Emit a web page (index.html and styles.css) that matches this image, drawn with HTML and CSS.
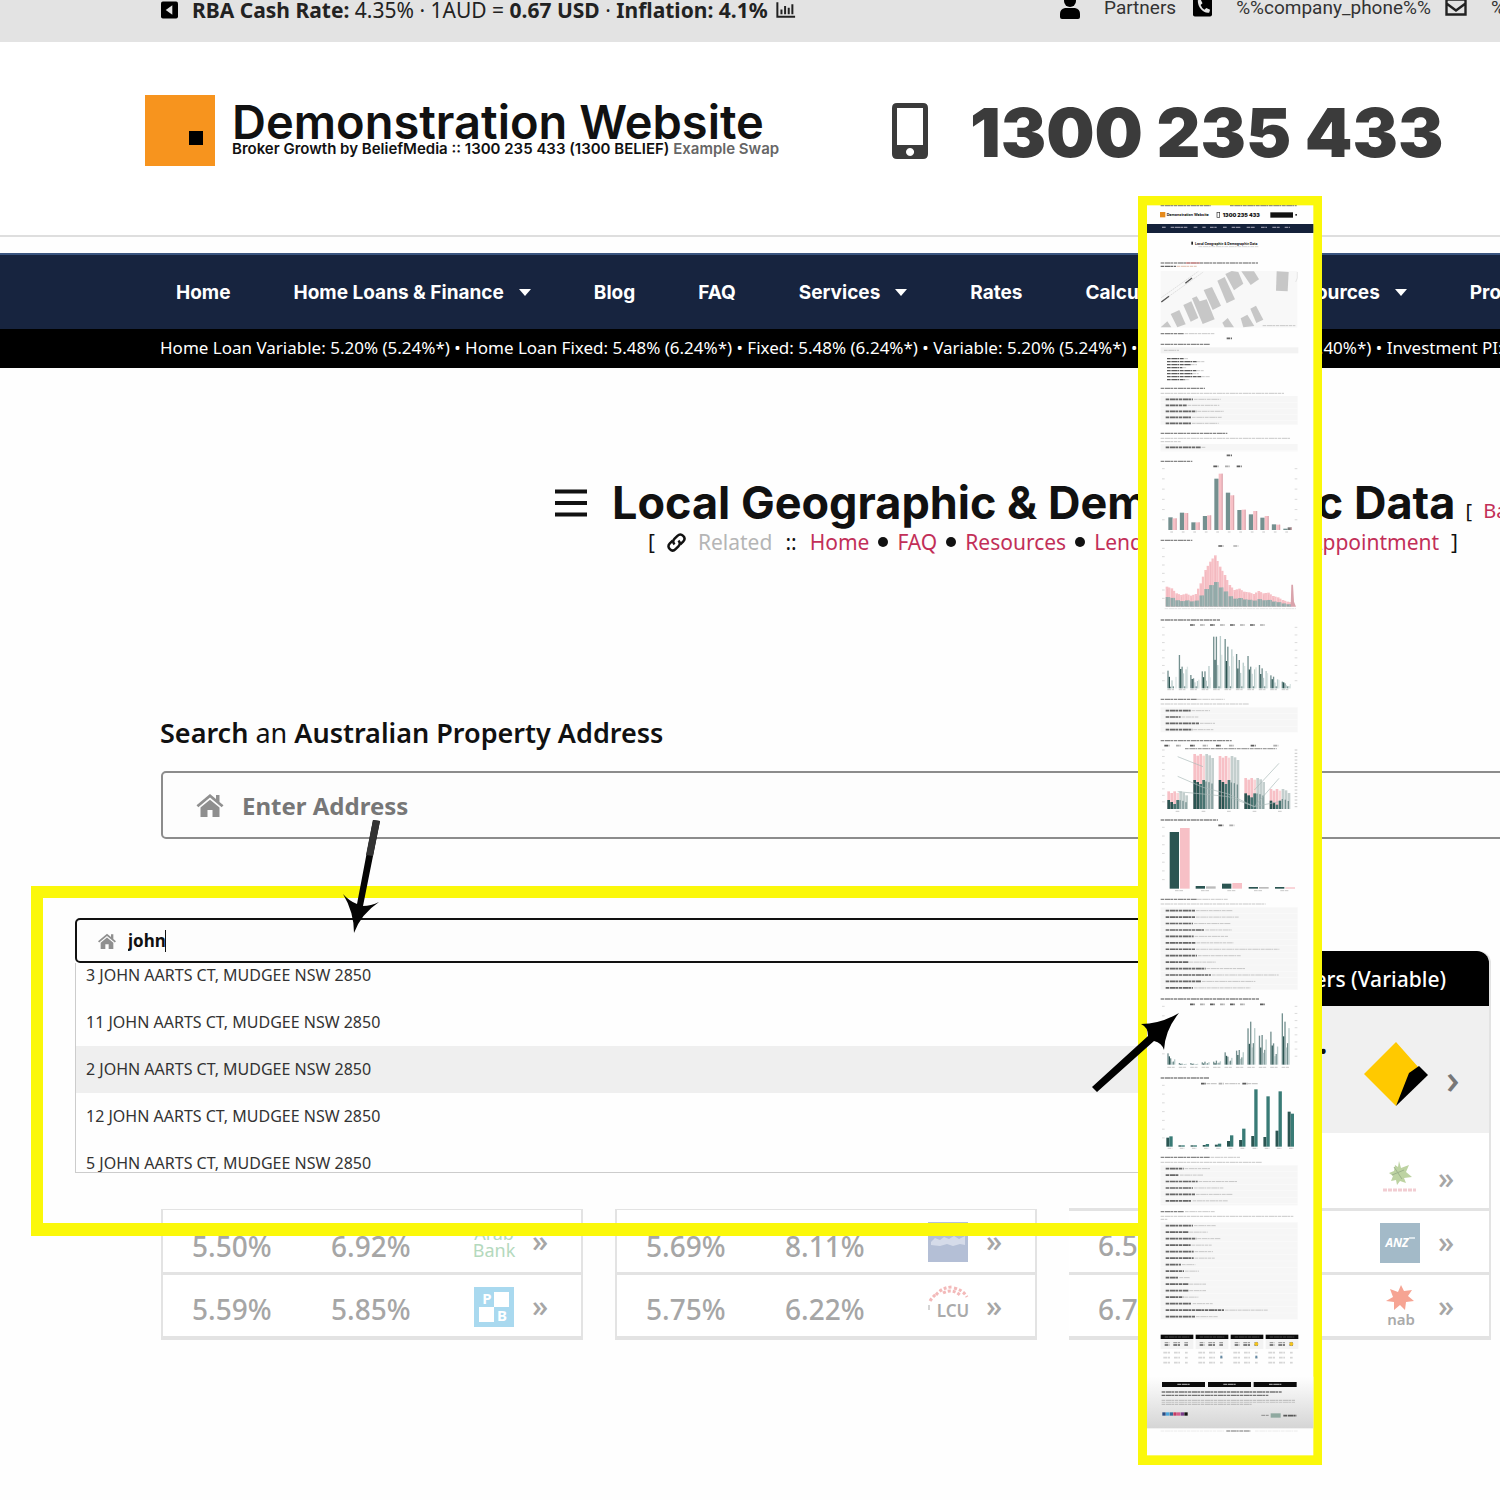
FILE: index.html
```html
<!DOCTYPE html>
<html lang="en">
<head>
<meta charset="utf-8">
<title>Local Geographic &amp; Demographic Data</title>
<link rel="stylesheet" href="styles.css">
</head>
<body>
<svg class="defs" aria-hidden="true">
  <symbol id="i-home" viewBox="0 0 28 24"><path d="M14 1 0.500 12.300 2.300 14.300 14 4.600 25.700 14.300 27.500 12.300 23.500 9V2h-3.500v4z"/><path d="M14 6.700 4.500 14.500V24h7v-7h5v7h7v-9.500z"/></symbol>
</svg>
<div class="page">
  <div class="topbar">
    <p class="rates">
      <svg class="ic-left" viewBox="0 0 18 18"><rect width="18" height="18" rx="2"/><path d="M12 4v10L5 9z" fill="#e3e3e3"/></svg>
      <span><b>RBA Cash Rate:</b> 4.35% · 1AUD = <b>0.67 USD</b> · <b>Inflation: 4.1%</b></span>
      <svg class="ic-chart" viewBox="0 0 22 18"><path d="M1.500 0v16H21M6 13V8M10 13V4M14 13V6M18 13V2" fill="none" stroke="#222" stroke-width="2.200"/></svg>
    </p>
    <div class="contacts">
      <svg class="ic-user" viewBox="0 0 20 24"><circle cx="10" cy="6" r="6"/><path d="M5 13h10q5 1 5 6v3q0 2-2 2H2q-2 0-2-2v-3q0-5 5-6z"/></svg>
      <a href="#">Partners</a>
      <svg class="ic-phone" viewBox="0 0 20 20"><rect width="20" height="20" rx="2"/><path d="M5 3 8 2l2 4-2 2q1 3 4 5l2-2 4 2-1 3C11 17 5 11 5 3z" fill="#e3e3e3"/></svg>
      <a href="#">%%company_phone%%</a>
      <svg class="ic-mail" viewBox="0 0 22 18"><path d="M1.500 1.500h19v15h-19zM1.500 5.500l9.500 7 9.500-7" fill="none" stroke="#222" stroke-width="2.400"/></svg>
      <a href="#">%%company_email%%</a>
    </div>
  </div>

  <header class="brand">
    <svg class="logo" viewBox="0 0 70 71"><rect width="70" height="71" fill="#f7941e"/><rect x="44" y="36" width="14" height="14"/></svg>
    <div class="names">
      <strong class="name">Demonstration Website</strong>
      <span class="tag">Broker Growth by BeliefMedia :: 1300 235 433 (1300 BELIEF) <em>Example Swap</em></span>
    </div>
    <svg class="mobile" viewBox="0 0 36 56"><path fill-rule="evenodd" fill="#3b3b3b" d="M5 0h26q5 0 5 5v46q0 5-5 5H5q-5 0-5-5V5q0-5 5-5zm0 5v37h26V5zm13 40a4 4 0 1 0 .1 0z"/></svg>
    <strong class="number">1300 235 433</strong>
  </header>

  <nav class="menu">
    <a href="#">Home</a><a class="sub" href="#">Home Loans &amp; Finance</a><a href="#">Blog</a><a href="#">FAQ</a><a class="sub" href="#">Services</a><a href="#">Rates</a><a class="sub" href="#">Calculators</a><a class="sub" href="#">Resources</a><a href="#">Property</a>
  </nav>
  <p class="ticker">Home Loan Variable: 5.20% (5.24%*) • Home Loan Fixed: 5.48% (6.24%*) • Fixed: 5.48% (6.24%*) • Variable: 5.20% (5.24%*) • Investment: <span class="rate">5.49% (5.40%*)</span> • Investment PI: 5.49%</p>

  <main>
    <div class="heading">
      <svg class="burger" viewBox="0 0 32 28"><path d="M0 2.500h32M0 14h32M0 25.500h32" stroke="#111" stroke-width="4"/></svg>
      <h1>Local Geographic &amp; Demographic Data</h1>
      <span class="back">[ <a href="#">Back</a> ]</span>
    </div>
    <div class="related">
      <span>[</span>
      <svg class="ic-link" viewBox="0 0 20 20" fill="none" stroke="#111" stroke-width="2.600"><path d="M8 12q-3-3 0-6l3-3q3-3 6 0t0 6l-3 3"/><path d="M12 8q3 3 0 6l-3 3q-3 3-6 0t0-6l3-3"/></svg>
      <span class="muted">Related</span><span class="sep">::</span>
      <a href="#">Home</a><i></i><a href="#">FAQ</a><i></i><a href="#">Resources</a><i></i><a href="#">Lenders</a><i></i><a class="appt" href="#">Appointment</a>
      <span>]</span>
    </div>

    <label class="search-label" for="address"><b>Search</b> an <b>Australian Property Address</b></label>
    <div class="field">
      <svg class="house"><use href="#i-home"/></svg>
      <input id="address" type="text" placeholder="Enter Address">
    </div>

    <section class="cards">
      <table class="card">
        <colgroup><col class="c-rate"><col class="c-rate"><col class="c-bank"><col></colgroup>
        <tbody>
          <tr><td>5.50%</td><td>6.92%</td><td class="bank"><svg viewBox="0 0 40 40"><text x="20" y="18" class="bank-green">Arab</text><text x="20" y="35" class="bank-green">Bank</text></svg></td><td class="go">»</td></tr>
          <tr><td>5.59%</td><td>5.85%</td><td class="bank"><svg viewBox="0 0 40 40"><rect width="40" height="40" fill="#a9d9ef"/><path d="M20 5h15v15H20zM5 20h15v15H5z" fill="#fff"/><text x="13" y="17" class="pb">P</text><text x="28" y="34" class="pb">B</text></svg></td><td class="go">»</td></tr>
        </tbody>
      </table>
      <table class="card">
        <colgroup><col class="c-rate"><col class="c-rate"><col class="c-bank"><col></colgroup>
        <tbody>
          <tr><td>5.69%</td><td>8.11%</td><td class="bank"><svg viewBox="0 0 40 40"><rect width="40" height="40" fill="#b4bfd6"/><path d="M3 20l4-4 5 2 4-3 5 2 5-3 5 3 6-3v9l-5-1-7 2-6-2-7 2-9-1z" fill="#d5dbe9"/></svg></td><td class="go">»</td></tr>
          <tr><td>5.75%</td><td>6.22%</td><td class="bank"><svg viewBox="0 0 40 40"><path d="M2 14q3-5 8-8M8 8q6-8 17-8M26 1q9 2 13 9M15 6q10-5 18 3" fill="none" stroke="#f3b9b9" stroke-width="3" stroke-dasharray="3 2"/><path d="M1 18v5" stroke="#aaa"/><text x="25" y="30" class="lcu">LCU</text></svg></td><td class="go">»</td></tr>
        </tbody>
      </table>
      <table class="card lenders">
        <colgroup><col class="c-rate"><col class="c-rate"><col class="c-bank"><col></colgroup>
        <thead><tr><th colspan="4">Lenders (Variable)</th></tr></thead>
        <tbody>
          <tr class="lead"><td></td><td class="dot">•</td><td class="bank"><svg viewBox="0 0 64 64"><path d="M32 0 0 32l32 32 14-29 9-9z" fill="#ffc900"/><path d="M55 24 45 31 32 64l32-31z"/></svg></td><td class="go">›</td></tr>
          <tr class="tall"><td></td><td></td><td class="bank"><svg viewBox="0 0 40 40"><path d="M19 3l2 7 8-3-3 7 6 5-8 1 2 5-6-2-3 4-1-5-5 1 2-5-4-3 5-2 1-6 3 2z" fill="#bdd3a2"/><path d="M14 9l8 12M12 17l12-5" stroke="#9db38c"/><path d="M3 32h33" stroke="#f2cdd2" stroke-width="3" stroke-dasharray="4 1"/></svg></td><td class="go">»</td></tr>
          <tr><td>6.59%</td><td></td><td class="bank"><svg viewBox="0 0 40 40"><rect width="40" height="40" fill="#a3bac8"/><text x="17" y="24" class="anz">ANZ</text><path d="M29 15h6" stroke="#dbe6ec" stroke-width="2"/></svg></td><td class="go">»</td></tr>
          <tr><td>6.74%</td><td></td><td class="bank"><svg viewBox="0 0 40 40"><path d="M21-2l3 6 8-1-4 6 6 5-8 1-1 8-5-5-6 5 0-8-8-1 7-4-3-8 8 3z" fill="#f6a493"/><text x="21" y="38" class="nab">nab</text></svg></td><td class="go">»</td></tr>
        </tbody>
      </table>
    </section>
  </main>

  <section class="callout">
    <div class="panel">
      <div class="field small">
        <svg class="house"><use href="#i-home"/></svg>
        <input type="text" value="john" aria-label="Address"><span class="caret"></span>
      </div>
      <ul class="results">
        <li>3 JOHN AARTS CT, MUDGEE NSW 2850</li>
        <li>11 JOHN AARTS CT, MUDGEE NSW 2850</li>
        <li class="on">2 JOHN AARTS CT, MUDGEE NSW 2850</li>
        <li>12 JOHN AARTS CT, MUDGEE NSW 2850</li>
        <li>5 JOHN AARTS CT, MUDGEE NSW 2850</li>
      </ul>
    </div>
  </section>

  <svg id="report" class="report" viewBox="24 18 552 3807" role="img" aria-label="Property report overview"></svg>

  <svg class="arrow arrow-a" viewBox="0 0 40 114"><path d="M30 0l7 1L20 86Q28 86 36 82 18 94 11 113 11 92 0 74q6 7 14 10z" fill="#050505"/><path d="M30 0l7 1-7 35-7-1z" fill="#333"/></svg>
  <svg class="arrow arrow-b" viewBox="0 0 88 80"><path d="M0 74 56 23Q56 14 49 11 68 11 87 0 73 17 72 37 70 30 62 28L5 79z"/></svg>
</div>
<script src="report.js"></script>
</body>
</html>
```
FILE: styles.css
```css
* { box-sizing: border-box; }
body { margin: 0; background: #fefefe; color: #111; font-family: "Noto Sans", "Open Sans", sans-serif; }
a { color: inherit; text-decoration: none; }
p, h1, ul { margin: 0; padding: 0; }
svg { flex: none; display: block; }
.defs { position: absolute; width: 0; height: 0; }
.page { position: relative; overflow: hidden; min-height: 1500px; white-space: nowrap; }

.topbar { display: flex; height: 42px; padding-left: 161px; background: #e3e3e3; overflow: hidden; }
.rates { display: flex; flex: none; width: 899px; height: 20px; align-items: center; font-size: 21px; color: #222; }
.ic-left { width: 17px; height: 18px; margin-right: 14px; }
.ic-chart { width: 20px; height: 17px; margin-left: 8px; }
.contacts { display: flex; height: 14px; align-items: center; font: 19px Roboto, sans-serif; color: #333; }
.ic-user { width: 20px; height: 24px; margin-right: 24px; }
.ic-phone { width: 19px; height: 20px; margin: 0 24px 0 17px; }
.ic-mail { width: 22px; height: 18px; margin: 0 24px 0 14px; }

.brand { display: flex; height: 195px; padding: 53px 0 0 145px; border-bottom: 2px solid #dedede; background: #fff; font-family: Inter, sans-serif; }
.logo { width: 70px; height: 71px; }
.names { display: flex; flex: none; flex-direction: column; width: 676px; padding: 8px 0 0 17px; }
.name { font-size: 47px; font-weight: 600; line-height: 38px; }
.tag { font-size: 15px; font-weight: 600; line-height: 16px; }
.tag em { font-style: normal; color: #666; }
.mobile { width: 36px; height: 56px; margin: 8px 42px 0 1px; }
.number { font-size: 68px; font-weight: 900; line-height: 74px; color: #3b3b3b; }

.menu { display: flex; gap: 63px; align-items: center; height: 76px; margin-top: 16px; padding-left: 176px; border-top: 2px solid #3a5580; background: #17243f; color: #fff; font: 700 19px Inter, sans-serif; }
.sub { display: flex; align-items: center; gap: 15px; }
.sub::after { content: ""; border: 6px solid transparent; border-top: 7px solid #fff; border-bottom: 0; }
.ticker { height: 39px; padding-left: 160px; background: #000; color: #fff; font-size: 17px; line-height: 38px; }
.ticker .rate { margin-left: 10px; }

.heading { display: flex; align-items: center; height: 50px; margin: 110px 0 0 555px; }
.burger { width: 32px; height: 28px; margin-right: 25px; }
h1 { font: 700 45px/50px Inter, sans-serif; }
.back { margin: 14px 0 0 10px; font-size: 20px; }
.back a { margin-left: 6px; }
.back a, .related a { color: #c22f58; }
.related { display: flex; align-items: center; width: 810px; height: 28px; margin: 0 0 2px 648px; font-size: 21px; }
.ic-link { width: 19px; height: 19px; margin: 0 12px; }
.muted { color: #b5b5b5; }
.sep { margin: 0 13px; }
.related i { width: 10px; height: 10px; margin: 0 9px; border-radius: 50%; background: #111; }
.related .appt { margin: 0 12px 0 auto; }

.search-label { display: block; margin: 159px 0 20px 160px; font-size: 27px; line-height: 36px; }
.search-label b { font-weight: 600; }
.field { display: flex; align-items: center; height: 68px; margin-left: 161px; margin-right: -20px; padding-left: 33px; border: 2px solid #8c8c8c; border-radius: 5px; background: #fdfdfd; }
.house { width: 28px; height: 24px; fill: #8f8f8f; }
.field input { flex: 1; margin: 0; padding: 0 0 0 18px; border: 0; outline: 0; background: none; color: #111; font: 700 24px "Noto Sans", sans-serif; }
.field input::placeholder { color: #777; opacity: 1; }

.cards { display: grid; grid-template-columns: repeat(3, 422px); gap: 32px; align-items: end; margin: 112px 0 160px 161px; }
.card { width: 100%; table-layout: fixed; border-collapse: separate; border-spacing: 0; border: 2px solid #e3e3e3; border-top-width: 1px; border-bottom-width: 4px; color: #a6a6a6; font-size: 28px; font-weight: 500; background: #fff; }
.c-rate { width: 139px; }
.c-bank { width: 79px; }
.card td { height: 62px; padding: 9px 0 0 29px; }
.card tr + tr td { height: 64px; border-top: 3px solid #e3e3e3; padding-top: 6px; }
.card td.bank { padding: 2px 0 0 33px; }
.card td.go { padding: 0 0 0 12px; font-size: 30px; line-height: 40px; }
.bank svg { width: 40px; height: 40px; overflow: visible; }
.lenders { border-width: 0 2px 4px 0; border-radius: 12px 12px 0 0; }
.lenders th { height: 55px; padding: 0 43px 0 0; border-radius: 12px 12px 0 0; background: #000; color: #fff; font-size: 21px; font-weight: 500; text-align: right; }
.card .lead td { height: 127px; background: #f0f0f0; }
.card .lead td.bank { padding: 8px 0 0 17px; }
.card .lead .bank svg { width: 64px; height: 64px; }
.card .lead td.go { padding: 16px 0 0 20px; color: #777; font-size: 42px; }
.card .lead td.dot { padding: 0 20px 36px 0; color: #111; text-align: right; font-size: 20px; }
.card .tall td { height: 75px; border-top: 0; }
.card .tall td.bank, .card .tall td.go { padding-top: 14px; }
.bank-green { font: 18px "Noto Sans", sans-serif; fill: #b4d9bd; text-anchor: middle; }
.pb { font: 700 15px "Noto Sans", sans-serif; fill: #fff; text-anchor: middle; }
.lcu { font: 600 17px "Noto Sans", sans-serif; fill: #aaa; text-anchor: middle; }
.anz { font: italic 700 12px "Noto Sans", sans-serif; fill: #fff; text-anchor: middle; }
.nab { font: 600 15px "Noto Sans", sans-serif; fill: #aaa; text-anchor: middle; }

.callout { position: absolute; left: 31px; top: 886px; width: 1180px; height: 350px; border: 12px solid #fbf80a; border-bottom-width: 13px; }
.panel { height: 308px; padding: 20px 0 0 32px; background: #fefefe; }
.small { height: 45px; margin: 0; padding-left: 20px; border-color: #111; }
.small .house { width: 20px; height: 16px; }
.field.small input { flex: none; width: 48px; padding-left: 11px; font-size: 17px; }
.caret { width: 1px; height: 22px; background: #111; }
.results { height: 210px; overflow: hidden; list-style: none; border: solid #ccc; border-width: 0 0 1px 1px; font-size: 16px; line-height: 47px; color: #333; }
.results li { height: 47px; padding-left: 10px; }
.results li:first-child { margin-top: -11px; }
.results .on { background: #efefef; }

.report { position: absolute; left: 1138px; top: 196px; width: 184px; height: 1269px; }
.arrow { position: absolute; }
.arrow-a { left: 343px; top: 820px; width: 40px; height: 114px; }
.arrow-b { left: 1092px; top: 1013px; width: 88px; height: 80px; }
```
FILE: report.js
```js
const svg = document.getElementById('report');
const NS = 'http://www.w3.org/2000/svg';
const TEAL = '#2b5552', GREY = '#74908f', PALE = '#b9cccb', PINK = '#f7c0c6', ROSE = '#d9a3ab';

function add(tag, attrs, text) {
  const el = document.createElementNS(NS, tag);
  for (const k in attrs) el.setAttribute(k, attrs[k]);
  if (text) el.textContent = text;
  svg.appendChild(el);
}
const box = (x, y, w, h, fill) => add('rect', { x, y, width: w, height: h, fill });
const line = (x, y, w, color = '#999', h = 4) =>
  add('path', { d: `M${x} ${y}h${w}`, stroke: color, 'stroke-width': h, 'stroke-dasharray': '11 2 17 1 6 2', 'stroke-opacity': .8 });
const label = (x, y, size, text, fill = '#111', weight = 700) =>
  add('text', { x, y, fill, 'font-size': size, 'font-weight': weight, 'font-family': 'Inter, sans-serif' }, text);
const poly = (points, fill) => add('polygon', { points, fill });

box(24, 18, 552, 3807, '#fbf80a');
box(51, 46, 499, 3750, '#fefefe');

/* site header */
line(92, 47, 150, '#776'); line(300, 47, 200, '#776');
box(90, 66, 16, 16, '#e58a1c');
label(110, 79, 11, 'Demonstration Website');
add('rect', { x: 261, y: 67, width: 8, height: 15, fill: 'none', stroke: '#333', 'stroke-width': 2 });
label(278, 81, 16, '1300 235 433', '#111', 900);
box(421, 67, 68, 16, '#111'); box(496, 72, 5, 5, '#333');
box(51, 102, 499, 27, '#14213a');
[[96, 12], [122, 50], [191, 12], [217, 10], [240, 20], [279, 12], [305, 26], [350, 24], [393, 18], [427, 22], [464, 16]].forEach(([x, w]) => line(x, 112, w, '#aab', 4));
box(184, 155, 5, 9, '#222');
label(195, 164, 10, 'Local Geographic & Demographic Data');
line(205, 170, 180, '#ccc', 3);
line(92, 219, 292, '#777'); line(168, 219, 42, '#d88'); line(92, 229, 46, '#444'); line(140, 229, 60, '#dba');

/* map */
box(92, 243, 410, 170, '#f8f8f8');
['122,372 148,360 167,403 142,412', '160,345 184,334 205,384 182,395', '186,325 200,319 209,334 230,328 254,388 218,402', '221,300 246,291 273,347 248,360', '262,272 284,261 315,328 290,340', '286,252 305,243 325,246 340,281 312,301', '334,244 372,244 387,268 362,285', '440,244 476,246 473,304 438,302', '92,412 112,394 124,412', '277,398 293,384 312,412 284,412', '332,385 352,374 373,408 340,412', '361,356 378,347 400,389 379,399'].forEach(p => poly(p, '#c7c7c7'));
add('path', { d: 'M94 335 220 246M94 323 205 244', stroke: '#aaa', 'stroke-dasharray': '5 2', fill: 'none' });
add('path', { d: 'M94 336l23-17M166 280l20-16', stroke: '#555', 'stroke-width': 4 });
line(398, 407, 98, '#bbb', 3);
add('path', { d: 'M502 246v18l-5 12', stroke: '#bbb', fill: 'none' });

const title = (y, w) => line(92, y, w, '#666', 4);
const tiny = (y, w, x = 92) => line(x, y, w, '#bbb', 3);
title(431, 70); tiny(431, 90, 164); line(290, 445, 16, '#444', 5);
title(463, 148); box(92, 472, 413, 18, '#f2f2f2'); tiny(481, 45, 102);
[65, 112, 90, 58, 110, 95, 128, 68].forEach((w, i) => { line(111, 506 + i * 9, w * .8, '#333'); tiny(506 + i * 9, w * .2, 111 + w * .8); });
title(595, 133); tiny(610, 370);

function rows(y, h, list, step) {
  box(92, y, 411, h, '#f6f6f6');
  list.forEach(([a, b], i) => {
    const ry = y + 10 + i * step;
    box(92, ry + 8, 411, 1, '#fff');
    line(107, ry, a, '#444', 5);
    tiny(ry, b, 110 + a);
  });
}
rows(618, 86, [[82, 80], [63, 95], [92, 80], [76, 90], [76, 80]], 18);
title(730, 200); tiny(745, 390); tiny(755, 60);
rows(762, 22, [[105, 12]], 18);
line(290, 796, 16, '#444', 5);

const axis = (x, top, bottom, n) => { for (let i = 0; i < n; i++) line(x, top + (bottom - top) * i / n, 8, '#bbb', 2); };
const legend = (y, xs) => xs.forEach((x, i) => { line(x, y, 15, i % 2 ? '#999' : '#333', 5); });

/* bar chart: family members */
title(814, 95); legend(829, [250, 285, 320]); axis(96, 836, 1020, 6); axis(494, 836, 1020, 6);
[[202, 205], [188, 189], [217, 217], [198, 196], [86, 71], [128, 136], [180, 179], [193, 183], [203, 198], [223, 224], [236, 232]].forEach(([a, b], i) => {
  const x = 115 + i * 34.500;
  box(x, 780 + a, 13, 240 - a, GREY); box(x + 13, 780 + b, 12, 240 - b, i > 9 ? '#777' : PINK);
  box(x + 22, 780 + b, 3, 240 - b, ROSE); tiny(1026, 8, x + 6);
});

/* population by age */
title(1051, 95); legend(1068, [265, 310]); axis(96, 1075, 1250, 7);
const tops = [410, 415, 430, 435, 431, 437, 432, 400, 360, 335, 316, 350, 375, 405, 420, 416, 425, 427, 432, 423, 430, 428, 438, 442, 450, 455];
tops.forEach((t, i) => {
  const x = 107 + i * 14.500, mid = 470 - (470 - t) * .48;
  const next = tops[i + 1] || 458;
  box(x, 780 + t, 8, 470 - t, PINK); box(x + 7, 780 + (t + next) / 2, 7, 470 - (t + next) / 2, PINK);
  box(x + 4, 786 + t, 1, 464 - t, '#e9aab2');
  box(x, 780 + mid, 14, 470 - mid, '#93aaa9'); box(x + 9, 780 + mid, 2, 470 - mid, '#b4c3c2');
});
poly('482,1250 484,1184 489,1184 492,1235 498,1250', ROSE); line(104, 1256, 394, '#ccc', 2);

/* clustered bars */
title(1290, 178); legend(1305, [180, 210, 240, 270, 300, 330, 360, 390]); axis(96, 1312, 1495, 8); axis(494, 1312, 1495, 8);
[[662, 710], [615, 650], [675, 685], [664, 640], [560, 550], [567, 590], [612, 630], [618, 650], [645, 655], [676, 680], [695, 700]].forEach(([a, b], i) => {
  const x = 112 + i * 34.300, base = 715;
  [[a, GREY], [(a + base) / 2 - 8, TEAL], [Math.max(b, a), GREY], [a + (base - a) * .55, PALE], [base - 6, GREY], [b + 8, PALE], [a + (base - a) * .35, '#dbe5e4']].forEach(([t, c], j) => box(x + j * 4, 780 + t, 4, base - t, c));
  tiny(1499, 20, x);
});
title(1528, 110); tiny(1528, 80, 204); tiny(1542, 265);
rows(1552, 75, [[75, 55], [45, 50], [100, 45], [80, 60]], 19);

/* repayments by bracket */
title(1652, 213); legend(1667, [103, 138, 180, 218, 258, 297, 362, 430]); line(165, 1676, 275, '#888', 4);
axis(96, 1680, 1855, 9); for (let i = 0; i < 18; i++) line(494, 1680 + i * 10, 8, '#999', 2);
[[304, 330, 112], [192, 270, 190], [198, 270, 266], [264, 310, 343], [297, 332, 419]].forEach(([t, m, x]) => {
  for (let j = 0; j < 4; j++) {
    box(x + j * 9, 1500 + t + (j % 2) * 5, 8, 357 - t - (j % 2) * 5, j < 3 ? PINK : '#f9d4d7');
    box(x + j * 9, 1500 + m + (j % 3) * 6, 8, 357 - m - (j % 3) * 6, j < 2 ? TEAL : '#477370');
  }
  for (let j = 4; j < 7; j++) { const q = t + [0, 4, 12][j - 4]; box(x + j * 9, 1500 + q, 8, 357 - q, '#c4cfce'); box(x + j * 9, 1500 + (q + 357) / 2, 4, (357 - q) / 2, GREY); }
  tiny(1864, 12, x + 25);
});
add('path', { d: 'M143 1759l76 33 76 20 78 38 74-85M143 1805l76 7 76 8 78 30 74-15M143 1700l76 30M373 1800l74-80', fill: 'none', stroke: '#a9b9b8', 'stroke-width': 2 });

/* main language */
title(1890, 172); legend(1906, [265, 298]); axis(96, 1912, 2095, 7);
[[426, 414, 119], [588, 589, 197], [581, 579, 276], [591, 591, 356], [591, 592, 435]].forEach(([a, b, x], i) => {
  box(x, 1500 + a, 28, 596 - a, TEAL); box(x + 31, 1500 + b, 29, 596 - b, i % 2 ? '#bbb' : PINK); tiny(2102, 24, x + 16);
});
title(2128, 110); tiny(2128, 90, 204); tiny(2142, 315);
rows(2152, 247, [[88, 110], [88, 130], [82, 110], [116, 80], [84, 100], [90, 110], [88, 250], [94, 130], [68, 80], [120, 115], [136, 200], [106, 160], [82, 170]], 19.300);

/* dwelling costs */
title(2427, 295); legend(2443, [180, 210, 240, 270, 300, 330, 390]); axis(96, 2449, 2620, 6); axis(494, 2449, 2620, 8);
[[340, 355], [369, 371], [369, 371], [367, 365], [365, 362], [337, 350], [332, 330], [265, 245], [287, 285], [275, 310], [220, 245]].forEach(([a, b], i) => {
  const x = 112 + i * 34.300, base = 374;
  [[a, GREY], [(a + base) / 2 - 8 * (base - a > 20), TEAL], [b, GREY], [b + (base - b) * .6, PALE], [(b + base) / 2, GREY], [b + (base - b) * .15, PALE]].forEach(([t, c], j) => box(x + j * 4, 2250 + t, 4, base - t, c));
  tiny(2632, 22, x);
});

/* dwelling totals */
title(2664, 145); legend(2681, [213, 266, 337]); line(230, 2681, 30, '#bbb', 4); line(285, 2681, 45, '#bbb', 4); line(353, 2681, 30, '#bbb', 4);
axis(96, 2686, 2870, 7);
[[593, 589], [616, 616], [616, 616], [615, 612], [614, 611], [603, 586], [600, 566], [588, 448], [591, 469], [572, 454], [515, 521]].forEach(([a, b], i) => {
  const x = 109 + i * 36.400;
  box(x, 2250 + a, 9, 620 - a, TEAL); box(x + 9, 2250 + b, 10, 620 - b, '#397b76'); tiny(2875, 14, x + 4);
});
title(2902, 148); tiny(2902, 88, 242); tiny(2917, 303);
rows(2926, 120, [[54, 76], [40, 70], [96, 115], [82, 88], [88, 110], [78, 105]], 19.300);
title(3065, 70); tiny(3065, 90, 165); tiny(3079, 398); tiny(3088, 20);
rows(3097, 292, [[82, 65], [68, 55], [92, 70], [75, 60], [84, 55], [84, 60], [46, 40], [55, 42], [38, 32], [68, 50], [68, 52], [53, 42], [78, 60], [175, 130], [88, 65]], 19.500);

/* rate tables and footer */
add('defs', {}); svg.lastChild.innerHTML = '<linearGradient id="fade" x2="0" y2="1"><stop offset="0" stop-color="#fefefe"/><stop offset="1" stop-color="#d5d5d5"/></linearGradient>';
[92, 197, 302, 407].forEach((x, n) => {
  box(x, 3434, 98, 13, '#0b0b0b'); line(x + 12, 3441, 74, '#555', 3);
  box(x, 3447, 98, 30, '#f3f3f3');
  [[12, 14], [38, 20], [71, 12]].forEach(([dx, w]) => { line(x + dx, 3458, w, '#888'); line(x + dx, 3465, w, '#333'); });
  for (let r = 0; r < 3; r++) [[8, 20], [40, 18], [73, 8]].forEach(([dx, w]) => line(x + dx, 3488 + r * 15, w, '#ccc', 5));
  if (n > 1) poly(`${x + 70},3462 ${x + 77},3455 ${x + 84},3462 ${x + 77},3469`, '#f3c31c');
  if (n === 1 || n === 2) box(x + 74, 3497, 6, 8, '#668ba5');
});
box(51, 3560, 499, 155, 'url(#fade)');
[96, 234, 371].forEach(x => { box(x, 3576, 129, 15, '#0b0b0b'); line(x + 46, 3583, 38, '#bbb', 4); });
line(95, 3606, 360, '#555'); line(95, 3616, 320, '#555');
line(95, 3631, 400, '#aaa', 3); line(95, 3637, 400, '#bbb', 3); line(95, 3643, 270, '#aaa', 3);
['#2a4d83', '#4aa6dd', '#326a99', '#c53a62', '#d65b8a', '#7a3d8a', '#111'].forEach((c, i) => box(97 + i * 11, 3667, 10, 10, c));
line(394, 3676, 22, '#777', 3); box(422, 3670, 30, 13, '#8fa9a0'); line(460, 3677, 40, '#333', 5);
line(92, 3723, 190, '#ddd', 2); line(289, 3723, 72, '#888', 4); line(375, 3723, 130, '#ddd', 2);
```
